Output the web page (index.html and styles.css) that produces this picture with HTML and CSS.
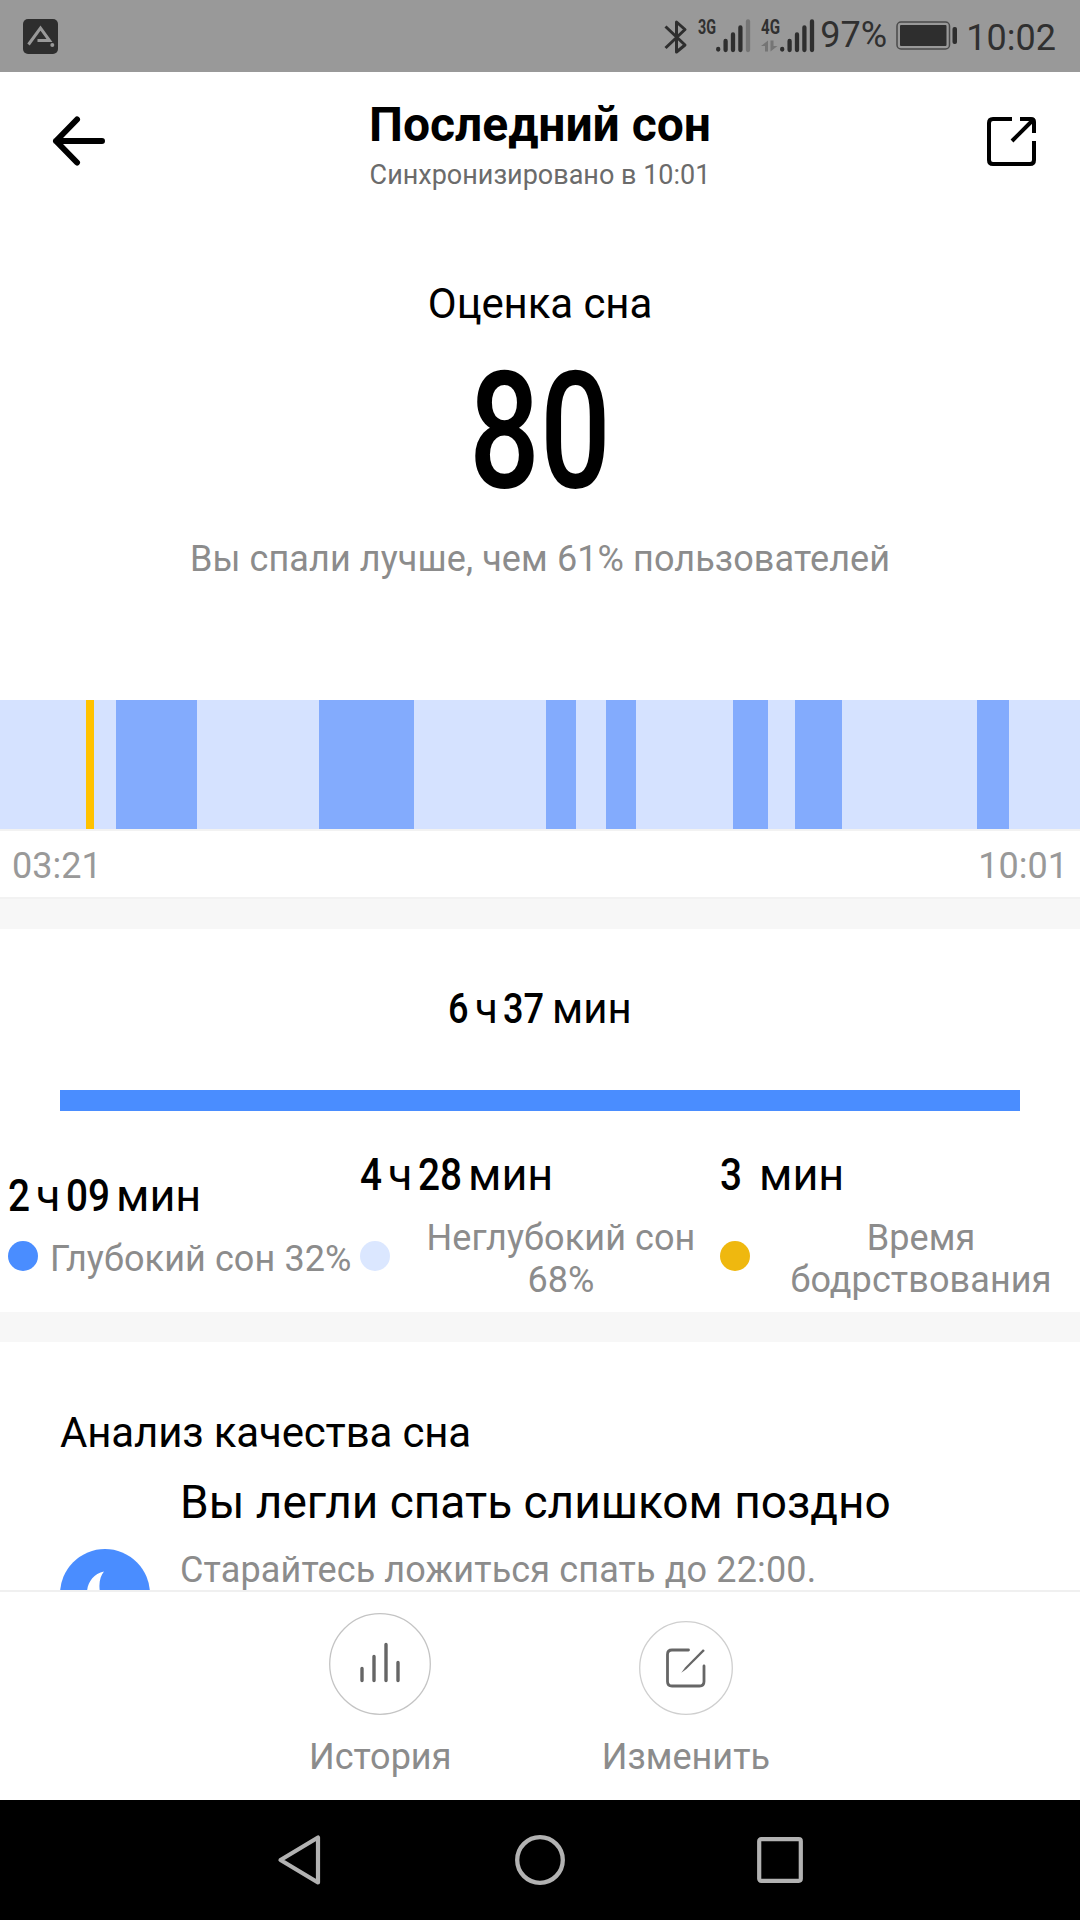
FILE: index.html
```html
<!DOCTYPE html>
<html lang="ru">
<head>
<meta charset="utf-8">
<title>Последний сон</title>
<link rel="stylesheet" href="styles.css">
</head>
<body>
<div class="screen">
  <div class="status-bar">
    <svg class="app-badge" width="35" height="35" viewBox="0 0 35 35">
      <rect width="35" height="35" rx="5" fill="#2e2e2e"/>
      <path d="M5.500 25.500L17.500 9L26.500 21.500H14.500" fill="none" stroke="#999" stroke-width="3"/>
      <circle cx="29.300" cy="26" r="2" fill="#999"/>
    </svg>
    <svg class="signals" width="152" height="46" viewBox="0 -10 152 46">
      <path d="M1.500 7.500L21 26L12.500 33V3L21 10.500L1.500 29" fill="none" stroke="#2e2e2e" stroke-width="3" stroke-linejoin="round"/>
      <text class="net" x="34" y="15" textLength="18" lengthAdjust="spacingAndGlyphs">3G</text>
      <g stroke="#2e2e2e" stroke-width="4.300" stroke-linecap="round">
        <path d="M54.200 30.500v-.500M61.600 31V22M69 31V15.500M76.400 31V8.500"/>
        <path d="M84 31V2.500" stroke="#757575"/>
        <path d="M118.200 30.500v-.500M125.600 31V22M133 31V15.500M140.400 31V8.500M148 31V2.500"/>
      </g>
      <text class="net" x="97" y="15" textLength="19" lengthAdjust="spacingAndGlyphs">4G</text>
      <path d="M97 27L104 21.500V32.500H101V27ZM106.500 21.500H109.500V27H113.500L106.500 32.500Z" fill="#757575"/>
    </svg>
    <span class="percent">97%</span>
    <svg class="battery" width="62" height="30" viewBox="0 0 62 30">
      <rect x="1" y="1" width="52.500" height="27" rx="4" fill="none" stroke="#4a4a4a" stroke-width="1.500"/>
      <rect x="4" y="4" width="46.500" height="21" rx="1" fill="#2e2e2e"/>
      <rect x="56.500" y="6" width="4.500" height="17" rx="2" fill="#2e2e2e"/>
    </svg>
    <span class="clock">10:02</span>
  </div>

  <header class="header">
    <svg width="54" height="50" viewBox="0 0 54 50">
      <path d="M50 25H4M25 3.500L4 25L25 46.500" fill="none" stroke="#000" stroke-width="6" stroke-linecap="round" stroke-linejoin="round"/>
    </svg>
    <div class="heading">
      <h1>Последний сон</h1>
      <p>Синхронизировано в 10:01</p>
    </div>
    <svg class="share" width="49" height="49" viewBox="0 0 49 49">
      <path d="M25 2H6Q2 2 2 6V43Q2 47 6 47H43Q47 47 47 43V24M33 2H44Q47 2 47 5V16M45 4L25 24" fill="none" stroke="#000" stroke-width="4"/>
    </svg>
  </header>

  <main class="content">
    <section class="score">
      <h2>Оценка сна</h2>
      <div class="score-value">80</div>
      <p>Вы спали лучше, чем 61% пользователей</p>
    </section>

    <section>
      <div class="chart">
        <i class="light" style="width:86px"></i>
        <i class="awake" style="width:8px"></i>
        <i class="light" style="width:22px"></i>
        <i class="deep" style="width:81px"></i>
        <i class="light" style="width:122px"></i>
        <i class="deep" style="width:95px"></i>
        <i class="light" style="width:132px"></i>
        <i class="deep" style="width:30px"></i>
        <i class="light" style="width:30px"></i>
        <i class="deep" style="width:30px"></i>
        <i class="light" style="width:97px"></i>
        <i class="deep" style="width:35px"></i>
        <i class="light" style="width:27px"></i>
        <i class="deep" style="width:47px"></i>
        <i class="light" style="width:135px"></i>
        <i class="deep" style="width:32px"></i>
        <i class="light" style="width:71px"></i>
      </div>
      <div class="times"><span>03:21</span><span>10:01</span></div>
    </section>

    <section class="summary">
      <div class="duration total">
        <b class="one">6</b><span class="hour">ч</span><b class="two">37</b><span>мин</span>
      </div>
      <div class="bar"></div>
      <div class="legend">
        <div>
          <div class="duration"><b class="one">2</b><span class="hour">ч</span><b class="two">09</b><span>мин</span></div>
          <div class="label left"><i class="dot blue"></i><span>Глубокий сон 32%</span></div>
        </div>
        <div>
          <div class="duration"><b class="one">4</b><span class="hour">ч</span><b class="two">28</b><span>мин</span></div>
          <div class="label"><i class="dot pale"></i><span>Неглубокий сон 68%</span></div>
        </div>
        <div>
          <div class="duration"><b class="minutes">3</b><span>мин</span></div>
          <div class="label"><i class="dot yellow"></i><span>Время бодрствования</span></div>
        </div>
      </div>
    </section>

    <section class="analysis">
      <h2>Анализ качества сна</h2>
      <div class="advice">
        <svg width="90" height="90" viewBox="0 0 90 90">
          <circle cx="45" cy="45" r="45" fill="#4a8dff"/>
          <path d="M44 22.500C33 25 27 34 27 44C27 57 36 66 48 66C57 66 64 61 67 53C54 59 40 52 39.500 39C39 32 41 26 44 22.500Z" fill="#fff"/>
        </svg>
        <div>
          <h3>Вы легли спать слишком поздно</h3>
          <p>Старайтесь ложиться спать до 22:00.</p>
        </div>
      </div>
    </section>
  </main>

  <footer class="actions">
    <div class="action">
      <svg width="102" height="102" viewBox="0 0 102 102" fill="none">
        <circle cx="51" cy="51" r="50.300" stroke="#c4c4c4" stroke-width="1.300"/>
        <path d="M33 55.500V67.500M45 43.500V67.500M57 31.500V67.500M69 49.500V67.500" stroke="#666" stroke-width="3.400" stroke-linecap="round"/>
      </svg>
      <span>История</span>
    </div>
    <div class="action">
      <svg width="94" height="94" viewBox="0 0 94 94" fill="none">
        <circle cx="47" cy="47" r="46.300" stroke="#cfcfcf" stroke-width="1.300"/>
        <path d="M49.500 29H33Q28.500 29 28.500 33.500V60.500Q28.500 65 33 65H60.500Q65 65 65 60.500V45" stroke="#666" stroke-width="2.800" stroke-linecap="round"/>
        <path d="M42.300 51.700L46.300 46.200L63.700 28.600Q65.500 28 65.600 30L47.500 48Z" fill="#666"/>
      </svg>
      <span>Изменить</span>
    </div>
  </footer>

  <nav class="nav-bar">
    <svg width="46" height="54" viewBox="0 0 46 54"><path d="M42 4.500V49.500L4.500 27Z" fill="none" stroke="#b2b2b2" stroke-width="4.200" stroke-linejoin="round"/></svg>
    <svg width="50" height="50" viewBox="0 0 50 50"><circle cx="25" cy="25" r="22.800" fill="none" stroke="#b2b2b2" stroke-width="4.300"/></svg>
    <svg width="46" height="46" viewBox="0 0 46 46"><rect x="2.200" y="2.200" width="41.600" height="41.600" rx="2" fill="none" stroke="#b2b2b2" stroke-width="4.200"/></svg>
  </nav>
</div>
</body>
</html>
```
FILE: styles.css
```css
* { box-sizing: border-box; }
body { margin: 0; background: #fff; color: #000; font-family: Roboto, "Noto Sans", sans-serif; }
h1, h2, h3, p { margin: 0; font-weight: 400; }
svg { display: block; flex: none; }

.screen { width: 1080px; height: 1920px; display: flex; flex-direction: column; overflow: hidden; }

.status-bar { flex: none; height: 72px; padding: 0 24px 0 23px; display: flex; align-items: flex-start; background: #999; color: #303030; font-size: 36px; line-height: 42px; }
.app-badge { margin-top: 19px; }
.signals { margin: 9px 4px 0 auto; }
.net { font-size: 20.500px; font-weight: 700; fill: #303030; }
.percent { width: 76px; padding-top: 14px; }
.battery { margin: 21px 8px 0 0; }
.clock { padding-top: 17px; }

.header { flex: none; height: 144px; padding: 25px 44px 0 52px; display: grid; grid-template-columns: 1fr auto 1fr; }
.header svg { margin-top: 19px; }
.header .share { justify-self: end; margin-top: 20px; }
.heading { position: relative; left: -4px; text-align: center; }
.heading h1 { font-size: 48px; line-height: 56px; font-weight: 700; }
.heading p { margin-top: 6px; font-size: 27px; line-height: 32px; color: #6b6b6b; }

.content { flex: 1; min-height: 0; overflow: hidden; }

.score { height: 484px; padding-top: 63px; text-align: center; }
.score h2 { font-size: 42px; line-height: 50px; letter-spacing: -.1px; }
.score-value { margin-top: 21px; font-size: 163px; line-height: 163px; font-weight: 550; transform: scaleX(.765); }
.score p { margin-top: 25px; font-size: 36px; line-height: 42px; letter-spacing: .1px; color: #8c8c8c; }

.chart { display: flex; height: 131px; border-bottom: 2px solid #f2f2f2; }
.light { background: #d5e2ff; }
.deep { background: #83abfd; }
.awake { background: #ffc200; }
.times { height: 66px; padding: 14px 12px 0 12px; display: flex; justify-content: space-between; font-size: 36px; line-height: 42px; color: #999; }

.summary { height: 415px; border-top: 2px solid #f2f2f2; }
.summary::before { content: ""; display: block; height: 30px; background: #f7f7f7; }
.duration { display: flex; align-items: baseline; font-size: 45px; line-height: 52px; font-weight: 450; }
.duration b { flex: none; font-weight: 500; transform: scaleX(.86); transform-origin: left; white-space: nowrap; }
.one { width: 28px; }
.two { width: 50px; }
.hour { width: 30px; }
.minutes { width: 39px; }
.total { margin: 55px 0 56px 448px; font-size: 42px; line-height: 50px; }
.total .one { width: 27px; }
.total .hour { width: 28px; }
.total .two { width: 49px; }
.bar { height: 21px; margin: 0 60px; background: #4a8dff; }
.legend { display: grid; grid-template-columns: 352px 360px 360px; align-items: center; padding: 38px 0 11px 8px; }
.label { margin-top: 16px; display: flex; align-items: center; gap: 12px; font-size: 36px; line-height: 42px; letter-spacing: .1px; color: #8c8c8c; }
.label span { flex: 1; text-align: center; }
.label.left span { text-align: left; white-space: nowrap; }
.dot { flex: none; width: 30px; height: 30px; margin-bottom: 6px; border-radius: 50%; }
.blue { background: #4a8dff; }
.pale { background: #dbe7ff; }
.yellow { background: #efb80f; }

.analysis { border-top: 30px solid #f7f7f7; padding: 66px 60px 0; }
.analysis h2 { font-size: 42px; line-height: 50px; letter-spacing: -.15px; }
.advice { display: flex; gap: 30px; margin-top: 18px; }
.advice svg { margin-top: 73px; }
.advice h3 { font-size: 46px; line-height: 52px; }
.advice p { margin-top: 21px; font-size: 36px; line-height: 42px; letter-spacing: .13px; color: #8c8c8c; }

.actions { flex: none; height: 210px; border-top: 2px solid #f0f0f0; padding: 0 310px 22px 309px; display: flex; justify-content: space-between; align-items: flex-end; background: #fff; }
.action { display: flex; flex-direction: column; align-items: center; gap: 21px; font-size: 36px; line-height: 42px; color: #8c8c8c; }

.nav-bar { flex: none; height: 120px; padding: 0 277px 0 276px; display: flex; align-items: center; justify-content: space-between; background: #000; }
```
